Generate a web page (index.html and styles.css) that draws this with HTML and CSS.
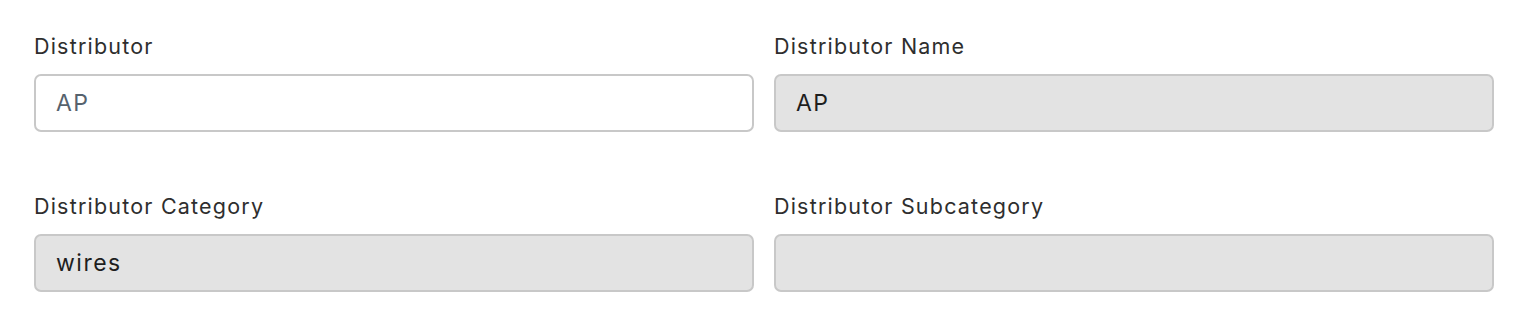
FILE: index.html
```html
<!DOCTYPE html>
<html lang="en">
<head>
    <meta charset="UTF-8">
    <meta name="viewport" content="width=device-width, initial-scale=1.0">
    <title>Distributor</title>
    <link rel="stylesheet" href="styles.css">
</head>
<body>
    <form class="distributor-form">
        <div class="form-group">
            <label for="distributor">Distributor</label>
            <input type="text" id="distributor" class="field field-edit" value="AP">
        </div>
        <div class="form-group">
            <label for="distributorName">Distributor Name</label>
            <input type="text" id="distributorName" class="field" value="AP" disabled>
        </div>
        <div class="form-group">
            <label for="distributorCategory">Distributor Category</label>
            <input type="text" id="distributorCategory" class="field" value="wires" disabled>
        </div>
        <div class="form-group">
            <label for="distributorSubcategory">Distributor Subcategory</label>
            <input type="text" id="distributorSubcategory" class="field" value="" disabled>
        </div>
    </form>
</body>
</html>
```

FILE: styles.css
```css
body {
    margin: 0;
    padding: 0;
    background: #fff;
    color: #333;
    font-family: Inter, "Noto Sans", sans-serif;
}
.distributor-form {
    display: grid;
    grid-template-columns: 720px 720px;
    column-gap: 20px;
    row-gap: 60px;
    padding: 32px 28px 0 34px;
}
.form-group label {
    display: block;
    font-size: 21.5px;
    line-height: 28px;
    letter-spacing: 1.2px;
    margin-bottom: 14px;
    color: #2e2e2e;
}
.field {
    display: block;
    box-sizing: border-box;
    width: 100%;
    height: 58px;
    padding: 0 20px;
    border: 2px solid #c8c8c8;
    border-radius: 7px;
    background: #e3e3e3;
    font-family: inherit;
    font-size: 23px;
    letter-spacing: 1.5px;
    color: #1e1e1e;
    -webkit-text-fill-color: #1e1e1e;
    opacity: 1;
}
.field-edit {
    background: #fff;
    color: #56626d;
    -webkit-text-fill-color: #56626d;
}
```
